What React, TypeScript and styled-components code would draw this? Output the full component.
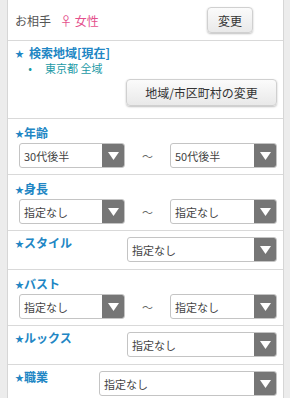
import React from "react";
import styled, { createGlobalStyle } from "styled-components";

const Global = createGlobalStyle`
  html, body { margin: 0; padding: 0; background: #ececec; }
  body { font-family: "Noto Sans CJK JP", "Noto Sans", sans-serif; }
`;

const Panel = styled.div`
  margin: 0 6px 0 7px;
  background: #fff;
  border-left: 1px solid #d6d6d6;
  border-right: 1px solid #d6d6d6;
  min-height: 398px;
`;

const Section = styled.div<{ $pt: number; $pb: number }>`
  border-bottom: 1px solid #d9d9d9;
  padding: ${(p) => p.$pt}px 6px ${(p) => p.$pb}px 7px;
`;

const HeaderRow = styled.div`
  height: 41px;
  border-bottom: 1px solid #d9d9d9;
  display: flex;
  align-items: center;
  padding: 0 30px 0 7px;
  box-sizing: border-box;
`;

const Partner = styled.span`
  font-size: 12px;
  color: #555;
  flex: 1;
`;

const Pink = styled.span`
  color: #e4508c;
  margin-left: 9px;
`;

const Button = styled.button<{ $w: number; $h: number }>`
  width: ${(p) => p.$w}px;
  height: ${(p) => p.$h}px;
  font-family: inherit;
  font-size: 12px;
  color: #333;
  border: 1px solid #d0d0d0;
  border-radius: 4px;
  background: linear-gradient(#fbfbfb, #e9e9e9);
  box-shadow: 0 1px 2px rgba(0, 0, 0, 0.25);
  padding: 0;
  display: flex;
  align-items: center;
  justify-content: center;
`;

const Label = styled.div`
  font-size: 12px;
  font-weight: bold;
  color: #2186c4;
  line-height: 16px;
  height: 16px;
  white-space: nowrap;
`;

const Star = styled.span<{ $gap?: number }>`
  font-size: 9px;
  line-height: 1;
  vertical-align: 1px;
  margin-right: ${(p) => p.$gap ?? 0}px;
`;

const AreaItem = styled.div`
  font-size: 11px;
  color: #1c9aa6;
  line-height: 15px;
  height: 15px;
  &::before {
    content: "•";
    display: inline-block;
    width: 30px;
    text-align: center;
  }
`;

const RightRow = styled.div`
  display: flex;
  justify-content: flex-end;
  margin-top: 3px;
`;

const PairRow = styled.div`
  display: flex;
  align-items: center;
  margin-top: 2px;
  padding-left: 4px;
`;

const Tilde = styled.span`
  width: 45px;
  text-align: center;
  font-size: 11px;
  line-height: 14px;
  color: #666;
`;

const InlineRow = styled.div`
  display: flex;
  align-items: flex-start;
  justify-content: space-between;
`;

const InlineLabel = styled(Label)`
  margin-top: -2px;
`;

const SelectBox = styled.div<{ $w: number }>`
  width: ${(p) => p.$w}px;
  height: 25px;
  box-sizing: border-box;
  border: 1px solid #c4c4c4;
  border-radius: 3px;
  display: flex;
  overflow: hidden;
  flex-shrink: 0;
`;

const SelectText = styled.span`
  flex: 1;
  font-size: 11px;
  color: #444;
  display: flex;
  align-items: center;
  padding-left: 4px;
`;

const Arrow = styled.span`
  width: 22px;
  background: #767676;
  display: flex;
  align-items: center;
  justify-content: center;
`;

function Select({ w, value }: { w: number; value: string }) {
  return (
    <SelectBox $w={w}>
      <SelectText>{value}</SelectText>
      <Arrow>
        <svg width="11" height="8" viewBox="0 0 11 8">
          <polygon points="0,0 11,0 5.5,8" fill="#fff" />
        </svg>
      </Arrow>
    </SelectBox>
  );
}

function Pair({ label, a, b }: { label: string; a: string; b: string }) {
  return (
    <Section $pt={6} $pb={6}>
      <Label>
        <Star>★</Star>
        {label}
      </Label>
      <PairRow>
        <Select w={106} value={a} />
        <Tilde>〜</Tilde>
        <Select w={107} value={b} />
      </PairRow>
    </Section>
  );
}

function Inline({ label, w }: { label: string; w: number }) {
  return (
    <Section $pt={6} $pb={7}>
      <InlineRow>
        <InlineLabel>
          <Star>★</Star>
          {label}
        </InlineLabel>
        <Select w={w} value="指定なし" />
      </InlineRow>
    </Section>
  );
}

export default function App() {
  return (
    <>
      <Global />
      <Panel>
        <HeaderRow>
          <Partner>
            お相手<Pink>♀ 女性</Pink>
          </Partner>
          <Button $w={46} $h={26}>変更</Button>
        </HeaderRow>
        <Section $pt={4} $pb={12}>
          <Label>
            <Star $gap={5}>★</Star>検索地域[現在]
          </Label>
          <AreaItem>東京都 全域</AreaItem>
          <RightRow>
            <Button $w={151} $h={27}>地域/市区町村の変更</Button>
          </RightRow>
        </Section>
        <Pair label="年齢" a="30代後半" b="50代後半" />
        <Pair label="身長" a="指定なし" b="指定なし" />
        <Inline label="スタイル" w={150} />
        <Pair label="バスト" a="指定なし" b="指定なし" />
        <Inline label="ルックス" w={150} />
        <Inline label="職業" w={178} />
      </Panel>
    </>
  );
}
